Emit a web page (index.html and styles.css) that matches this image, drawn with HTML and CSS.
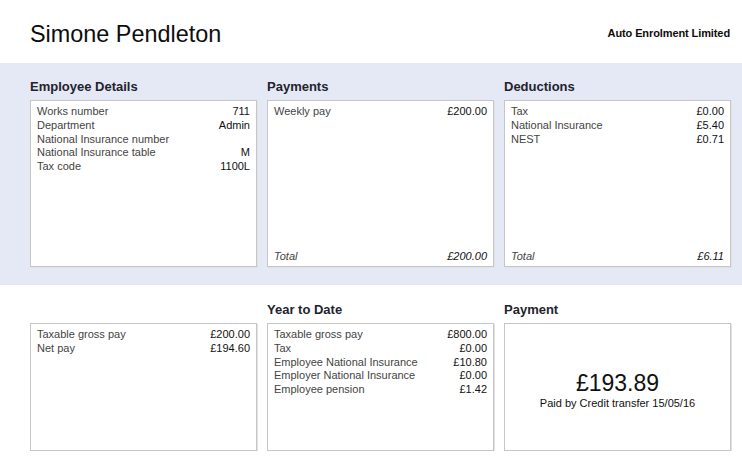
FILE: index.html
```html
<!DOCTYPE html>
<html lang="en">
<head>
<meta charset="utf-8">
<title>Payslip - Simone Pendleton</title>
<link rel="stylesheet" href="styles.css">
</head>
<body>
<header class="top">
  <h1 class="name">Simone Pendleton</h1>
  <div class="company">Auto Enrolment Limited</div>
</header>

<section class="band band-blue">
  <div class="col">
    <h2 class="heading">Employee Details</h2>
    <div class="box">
      <div class="row"><span class="label">Works number</span><span class="value">711</span></div>
      <div class="row"><span class="label">Department</span><span class="value">Admin</span></div>
      <div class="row"><span class="label">National Insurance number</span><span class="value"></span></div>
      <div class="row"><span class="label">National Insurance table</span><span class="value">M</span></div>
      <div class="row"><span class="label">Tax code</span><span class="value">1100L</span></div>
    </div>
  </div>
  <div class="col">
    <h2 class="heading">Payments</h2>
    <div class="box">
      <div class="row"><span class="label">Weekly pay</span><span class="value">£200.00</span></div>
      <div class="row total"><span class="label">Total</span><span class="value">£200.00</span></div>
    </div>
  </div>
  <div class="col">
    <h2 class="heading">Deductions</h2>
    <div class="box">
      <div class="row"><span class="label">Tax</span><span class="value">£0.00</span></div>
      <div class="row"><span class="label">National Insurance</span><span class="value">£5.40</span></div>
      <div class="row"><span class="label">NEST</span><span class="value">£0.71</span></div>
      <div class="row total"><span class="label">Total</span><span class="value">£6.11</span></div>
    </div>
  </div>
</section>

<section class="band band-white">
  <div class="col">
    <h2 class="heading">&nbsp;</h2>
    <div class="box box-short">
      <div class="row"><span class="label">Taxable gross pay</span><span class="value">£200.00</span></div>
      <div class="row"><span class="label">Net pay</span><span class="value">£194.60</span></div>
    </div>
  </div>
  <div class="col">
    <h2 class="heading">Year to Date</h2>
    <div class="box box-short">
      <div class="row"><span class="label">Taxable gross pay</span><span class="value">£800.00</span></div>
      <div class="row"><span class="label">Tax</span><span class="value">£0.00</span></div>
      <div class="row"><span class="label">Employee National Insurance</span><span class="value">£10.80</span></div>
      <div class="row"><span class="label">Employer National Insurance</span><span class="value">£0.00</span></div>
      <div class="row"><span class="label">Employee pension</span><span class="value">£1.42</span></div>
    </div>
  </div>
  <div class="col">
    <h2 class="heading">Payment</h2>
    <div class="box box-short box-pay">
      <div class="amount">£193.89</div>
      <div class="paid">Paid by Credit transfer 15/05/16</div>
    </div>
  </div>
</section>
</body>
</html>
```
FILE: styles.css
```css
* { box-sizing: border-box; }

html, body {
  margin: 0;
  padding: 0;
  background: #ffffff;
}

body {
  font-family: "Liberation Sans", Arial, sans-serif;
  color: #111;
  width: 742px;
}

.top {
  height: 63px;
  display: flex;
  justify-content: space-between;
  align-items: flex-start;
  padding: 21px 12px 0 30px;
}

.name {
  margin: 0;
  font-size: 23.4px;
  line-height: 26px;
  font-weight: normal;
  color: #0d0d0d;
}

.company {
  margin-top: 5px;
  font-size: 11px;
  line-height: 14px;
  font-weight: bold;
  color: #0d0d0d;
  letter-spacing: -0.1px;
}

.band {
  display: grid;
  grid-template-columns: repeat(3, 1fr);
  column-gap: 10px;
  padding: 0 11px 0 30px;
}

.band-blue {
  background: #e4e9f5;
  padding-top: 16px;
  padding-bottom: 18px;
}

.band-white {
  padding-top: 17px;
}

.col {
  display: flex;
  flex-direction: column;
}

.heading {
  margin: 0 0 6px 0;
  font-size: 13px;
  line-height: 15px;
  font-weight: bold;
  color: #23232d;
}

.box {
  background: #fff;
  border: 1px solid #c6c6c6;
  box-shadow: 1px 1px 0 #e2e2e2;
  height: 167px;
  padding: 4px 6px 2px 6px;
  display: flex;
  flex-direction: column;
}

.box-short {
  height: 128px;
}

.row {
  display: flex;
  justify-content: space-between;
  font-size: 11px;
  line-height: 13.75px;
}

.label {
  color: #444;
}

.value {
  color: #111;
}

.total {
  margin-top: auto;
  font-style: italic;
}

.box-pay {
  align-items: center;
  justify-content: center;
  text-align: center;
  padding: 5px 0 0 0;
}

.amount {
  font-size: 23px;
  line-height: 26px;
  color: #111;
}

.paid {
  font-size: 11px;
  line-height: 14px;
  color: #111;
}
```
